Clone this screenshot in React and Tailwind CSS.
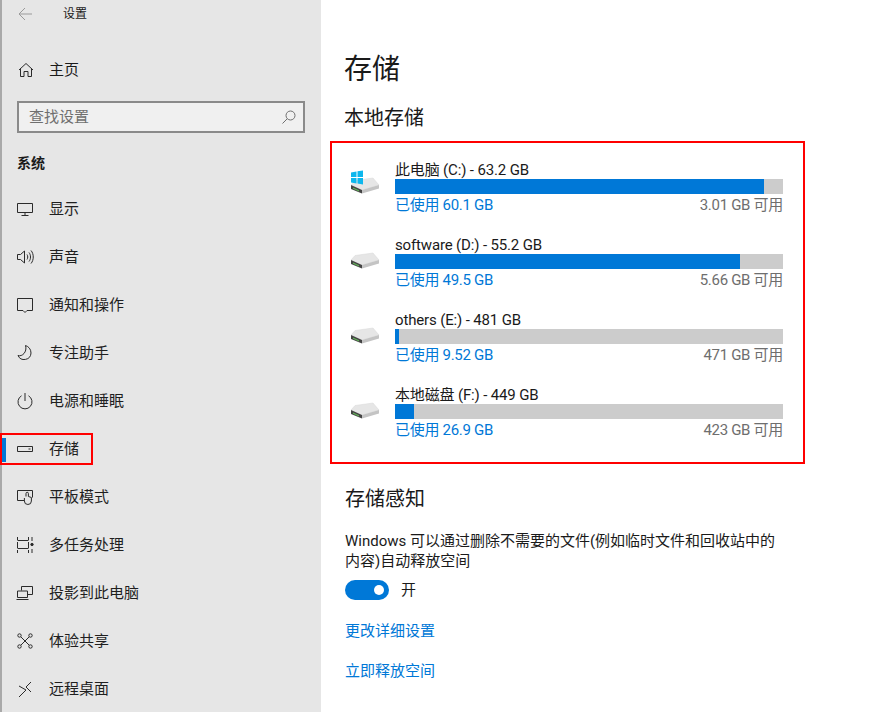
import React from 'react';

const font = { fontFamily: 'Roboto, "Noto Sans CJK SC", sans-serif' };

const Icon = ({ children }) => (
  <svg width="18" height="18" viewBox="0 0 18 18" fill="none" stroke="#2b2b2b" strokeWidth="1" className="shrink-0">
    {children}
  </svg>
);

const navItems = [
  {
    label: '显示',
    icon: <path d="M1.5 3.5h15v9h-15zM9 12.500v3M5.500 15.500h7" />,
  },
  {
    label: '声音',
    icon: (
      <>
        <path d="M1.500 6.500h3l4-3.500v12l-4-3.500h-3z" />
        <path d="M11 6.500c1 1.500 1 3.500 0 5M13 4.500c2 2.500 2 6.500 0 9M15 2.500c3 3.500 3 9.500 0 13" />
      </>
    ),
  },
  {
    label: '通知和操作',
    icon: <path d="M1.500 2.500h15v12h-5.500l-2 2-2-2H1.500z" />,
  },
  {
    label: '专注助手',
    icon: <path d="M9.500 1.500c3 1 5.500 3.500 5.500 7.500a6.800 6.800 0 0 1-13 2.500c4 1.500 9.500-3.500 7.500-10z" />,
  },
  {
    label: '电源和睡眠',
    icon: (
      <>
        <path d="M9 1v8" />
        <path d="M5.500 3.800a7 7 0 1 0 7 0" />
      </>
    ),
  },
  {
    label: '存储',
    active: true,
    icon: (
      <>
        <path d="M1.500 6.500h15v5h-15z" />
        <path d="M12.500 9h2" />
      </>
    ),
  },
  {
    label: '平板模式',
    icon: (
      <>
        <path d="M8 12.500H1.500v-10h15v7" />
        <path d="M10 8.500V5.500a1.200 1.200 0 0 1 2.400 0v3l3 1v3.500a3.500 3.500 0 0 1-7 0v-3" />
      </>
    ),
  },
  {
    label: '多任务处理',
    icon: (
      <>
        <path d="M1.500 1v3M12.500 1v3M1.500 4.500h11M1.500 6v6M12.500 6v6M1.500 12.500h11M1.500 14v3M12.500 14v3" />
        <path d="M16 1v4M16 13v4" />
        <circle cx="16" cy="8.500" r="1.200" fill="#2b2b2b" />
      </>
    ),
  },
  {
    label: '投影到此电脑',
    icon: (
      <>
        <path d="M5.500 6.500V2.500h11v8H12" />
        <path d="M1.500 7h10v6.500h-10zM.5 15.500h12" />
      </>
    ),
  },
  {
    label: '体验共享',
    icon: (
      <>
        <circle cx="3.500" cy="3.500" r="1.700" />
        <circle cx="14.500" cy="3.500" r="1.700" />
        <circle cx="3.500" cy="14.500" r="1.700" />
        <circle cx="14.500" cy="14.500" r="1.700" />
        <path d="M5 5c2.500 2.500 5.500 5.500 8 8M13 5c-2.500 2.500-5.500 5.500-8 8" />
      </>
    ),
  },
  {
    label: '远程桌面',
    icon: <path d="M3 6l7 4-7 7M15 2l-5 5 5 5" />,
  },
];

const drives = [
  { name: '此电脑 (C:) - 63.2 GB', used: '已使用 60.1 GB', free: '3.01 GB 可用', pct: 95.1, win: true },
  { name: 'software (D:) - 55.2 GB', used: '已使用 49.5 GB', free: '5.66 GB 可用', pct: 88.9 },
  { name: 'others (E:) - 481 GB', used: '已使用 9.52 GB', free: '471 GB 可用', pct: 1 },
  { name: '本地磁盘 (F:) - 449 GB', used: '已使用 26.9 GB', free: '423 GB 可用', pct: 5 },
];

const DriveIcon = ({ win }) => (
  <svg width="40" height="32" viewBox="0 0 40 32" className="shrink-0">
    <path d="M10 16.500l18-2.500 6 7-17 5-11-5z" fill="#e6e6e6" stroke="#d8d8d8" strokeWidth=".5" />
    <path d="M6 21l11 5v3.500L6 25z" fill="#444444" />
    <path d="M17 26l17-5v3.500L17 29.500z" fill="#c4c4c4" />
    <path d="M8 23.500l6 2.700v1.300l-6-2.700z" fill="#63b35a" />
    {win && (
      <path d="M6 8.500l5.500-1v5.500H6zM12.500 7.300L18 6.500v6.500h-5.500zM6 14h5.500v5.500L6 18.500zM12.500 14H18v6.500l-5.500-.9z" fill="#0db7ed" />
    )}
  </svg>
);

const Drive = ({ name, used, free, pct, win }) => (
  <div className="flex h-[75px] items-start">
    <div className="w-[50px] pt-[3px]">
      <DriveIcon win={win} />
    </div>
    <div className="w-[388px]">
      <div className="h-[17px] text-[15px] leading-[19px] tracking-[-0.15px] text-[#1a1a1a]">{name}</div>
      <div className="mt-[1px] h-[15px] bg-[#cccccc]">
        <div className="h-full bg-[#0078d7]" style={{ width: `${pct}%` }} />
      </div>
      <div className="mt-[1px] flex justify-between text-[15px] leading-[20px] tracking-[-0.3px]">
        <span className="text-[#0078d7]">{used}</span>
        <span className="text-[#6e6e6e]">{free}</span>
      </div>
    </div>
  </div>
);

export default function App() {
  return (
    <div className="flex h-[712px] w-[879px] overflow-hidden bg-white" style={font}>
      <aside className="h-full w-[321px] shrink-0 border-l-2 border-[#a9a9a9] bg-[#e6e6e6]">
        <div className="flex h-[28px] items-center pl-[16px]">
          <svg width="14" height="14" viewBox="0 0 14 14" fill="none" stroke="#9a9a9a" strokeWidth="1">
            <path d="M1 7h13M7 1L1 7l6 6" />
          </svg>
          <span className="ml-[31px] text-[12px] text-[#1a1a1a]">设置</span>
        </div>
        <div className="mt-[23px] flex h-[38px] items-center pl-[16px]">
          <svg width="16" height="16" viewBox="0 0 16 16" fill="none" stroke="#2b2b2b" strokeWidth="1" className="shrink-0">
            <path d="M1 8l7-6.500L15 8M2.500 6.500V14.500H6V9.500h4v5h3.500V6.500" />
          </svg>
          <span className="ml-[15px] text-[15px] text-[#1a1a1a]">主页</span>
        </div>
        <div className="ml-[15px] mt-[12px] flex h-[32px] w-[288px] items-center justify-between border-2 border-[#8a8a8a] bg-[#f0f0f0] pl-[10px] pr-[7px]">
          <span className="text-[15px] text-[#6f6f6f]">查找设置</span>
          <svg width="14" height="14" viewBox="0 0 14 14" fill="none" stroke="#6f6f6f" strokeWidth="1">
            <circle cx="8.500" cy="5.500" r="4.500" />
            <path d="M5.200 8.800L.5 13.500" />
          </svg>
        </div>
        <div className="ml-[15px] mt-[19px] text-[14px] font-bold leading-[22px] text-[#1a1a1a]">系统</div>
        <nav className="mt-[11px]">
          {navItems.map((item) => (
            <div key={item.label} className="relative flex h-[48px] items-center pl-[14px]">
              {item.active && <div className="absolute left-0 top-[13px] h-[24px] w-[4px] bg-[#0078d7]" />}
              {item.active && <div className="absolute left-[-2px] top-[8px] h-[32px] w-[93px] border-2 border-[#ff0000]" />}
              <Icon>{item.icon}</Icon>
              <span className="ml-[15px] text-[15px] text-[#1f1f1f]">{item.label}</span>
            </div>
          ))}
        </nav>
      </aside>

      <main className="flex-1 pl-[9px] pt-[47px]">
        <h1 className="pl-[14px] text-[28px] leading-[46px] text-[#1a1a1a]">存储</h1>
        <h2 className="mt-[10px] pl-[14px] text-[20px] leading-[30px] text-[#1a1a1a]">本地存储</h2>
        <div className="mt-[8px] h-[323px] w-[475px] border-2 border-[#ff0000] pl-[13px] pt-[18px]">
          {drives.map((d) => (
            <Drive key={d.name} {...d} />
          ))}
        </div>
        <div className="pl-[15px]">
          <h2 className="mt-[20px] text-[20px] leading-[30px] text-[#1a1a1a]">存储感知</h2>
          <p className="mt-[17px] w-[435px] text-[15px] leading-[20px] text-[#1a1a1a]">
            Windows 可以通过删除不需要的文件(例如临时文件和回收站中的内容)自动释放空间
          </p>
          <div className="mt-[9px] flex items-center">
            <div className="flex h-[20px] w-[44px] items-center justify-end rounded-full bg-[#0078d7] pr-[5px]">
              <div className="size-[10px] rounded-full bg-white" />
            </div>
            <span className="ml-[12px] text-[15px] leading-[18px] text-[#1a1a1a]">开</span>
          </div>
          <div className="mt-[21px] text-[15px] leading-[20px] text-[#0078d7]">更改详细设置</div>
          <div className="mt-[20px] text-[15px] leading-[20px] text-[#0078d7]">立即释放空间</div>
        </div>
      </main>
    </div>
  );
}
